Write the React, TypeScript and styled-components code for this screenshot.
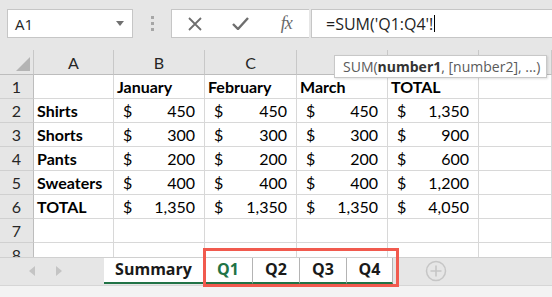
import React from "react";
import styled, { createGlobalStyle } from "styled-components";

const GlobalStyle = createGlobalStyle`
  html, body {
    margin: 0;
    padding: 0;
    overflow: hidden;
    background: #ffffff;
  }
  * {
    box-sizing: border-box;
  }
`;

const Window = styled.div`
  position: relative;
  width: 552px;
  height: 297px;
  display: flex;
  flex-direction: column;
  overflow: hidden;
  font-family: Lato, "Liberation Sans", sans-serif;
`;

// Строка формул
const Toolbar = styled.div`
  height: 50px;
  flex: none;
  display: flex;
  align-items: flex-start;
  padding: 9px 0 0 7px;
  background: #e6e6e6;
`;

const NameBox = styled.div`
  width: 126px;
  height: 29px;
  display: flex;
  align-items: center;
  justify-content: space-between;
  padding: 0 8px 0 7px;
  background: #ffffff;
  border: 1px solid #c6c6c6;
  font-family: "Open Sans", "Noto Sans", sans-serif;
  font-size: 15px;
  color: #262626;
`;

const Grip = styled.div`
  width: 38px;
  height: 29px;
  display: flex;
  flex-direction: column;
  align-items: center;
  justify-content: center;
  gap: 3px;
`;

const GripDot = styled.span`
  width: 3px;
  height: 3px;
  background: #a6a6a6;
`;

const ButtonBox = styled.div`
  width: 138px;
  height: 29px;
  display: flex;
  align-items: center;
  background: #ffffff;
  border: 1px solid #c6c6c6;
  border-right: none;
`;

const BarButton = styled.div`
  width: 46px;
  height: 100%;
  display: flex;
  align-items: center;
  justify-content: center;
`;

const Fx = styled.span`
  font-family: "Liberation Serif", serif;
  font-style: italic;
  font-size: 18px;
  color: #6a6a6a;
  letter-spacing: -1px;
`;

const FormulaInput = styled.div`
  flex: 1;
  height: 29px;
  margin-left: 2px;
  margin-right: -2px;
  display: flex;
  align-items: center;
  padding-left: 14px;
  background: #ffffff;
  border: 1px solid #c6c6c6;
  font-family: "Open Sans", "Noto Sans", sans-serif;
  font-size: 16px;
  color: #1f1f1f;
`;

const Caret = styled.span`
  display: inline-block;
  width: 1px;
  height: 17px;
  margin-left: 1px;
  background: #000000;
`;

// Сетка листа
const Sheet = styled.div`
  position: relative;
  flex: 1;
  overflow: hidden;
  display: grid;
  grid-template-columns: 34px 80px 91px 92px 91px 91px 1fr;
  grid-template-rows: 25px;
  grid-auto-rows: 24px;
  align-content: start;
`;

const HeadCell = styled.div`
  display: flex;
  align-items: center;
  justify-content: center;
  position: relative;
  background: #e6e6e6;
  border-right: 1px solid #c8c8c8;
  border-bottom: 1px solid #bdbdbd;
  font-size: 16px;
  color: #262626;
`;

const RowHead = styled.div`
  display: flex;
  align-items: center;
  justify-content: center;
  background: #e6e6e6;
  border-right: 1px solid #bdbdbd;
  border-bottom: 1px solid #d0d0d0;
  font-size: 16px;
  color: #262626;
`;

const Cell = styled.div<{ $bold?: boolean }>`
  display: flex;
  align-items: center;
  padding: 0 3px;
  border-right: 1px solid #d8d8d8;
  border-bottom: 1px solid #d8d8d8;
  font-size: 16px;
  font-weight: ${(p) => (p.$bold ? 700 : 400)};
  color: #000000;
  white-space: nowrap;
  overflow: hidden;
`;

const MoneyCell = styled(Cell)`
  justify-content: space-between;
  padding: 0 9px 0 9px;
`;

const Tooltip = styled.div`
  position: absolute;
  left: 334px;
  top: 5px;
  width: 213px;
  height: 23px;
  display: flex;
  align-items: center;
  padding-left: 8px;
  background: #ffffff;
  border: 1px solid #c8c8c8;
  box-shadow: 1px 1px 2px rgba(0, 0, 0, 0.12);
  font-family: "Open Sans", "Noto Sans", sans-serif;
  font-size: 14px;
  color: #5a5a5a;
  white-space: nowrap;
`;

const Arg = styled.b`
  color: #333333;
  font-weight: 700;
`;

// Ярлыки листов
const TabBar = styled.div`
  height: 28px;
  flex: none;
  display: flex;
  align-items: flex-start;
  background: #e6e6e6;
  border-top: 1px solid #d0d0d0;
`;

const Nav = styled.div`
  width: 104px;
  height: 26px;
  display: flex;
  align-items: center;
  padding-left: 29px;
  gap: 21px;
`;

const Tab = styled.div<{ $width: number; $active?: boolean }>`
  width: ${(p) => p.$width}px;
  height: 26px;
  display: flex;
  align-items: center;
  justify-content: center;
  padding-bottom: 2px;
  background: #ffffff;
  border-right: 1px solid #b4b4b4;
  border-bottom: 2px solid #217346;
  font-family: "Open Sans", "Noto Sans", sans-serif;
  font-size: 16px;
  font-weight: 700;
  color: ${(p) => (p.$active ? "#217346" : "#1a1a1a")};
`;

const AddSheet = styled.div`
  margin-left: 32px;
  height: 26px;
  display: flex;
  align-items: center;
`;

const ScrollStrip = styled.div`
  height: 12px;
  flex: none;
  background: #f3f3f3;
  border-top: 1px solid #d6d6d6;
`;

const Highlight = styled.div`
  position: absolute;
  left: 203px;
  top: 248px;
  width: 196px;
  height: 39px;
  border: 3px solid #f15a4e;
  pointer-events: none;
`;

type Row = {
  label: string;
  values: string[] | null;
  header?: boolean;
};

const rows: Row[] = [
  { label: "", values: ["January", "February", "March", "TOTAL"], header: true },
  { label: "Shirts", values: ["450", "450", "450", "1,350"] },
  { label: "Shorts", values: ["300", "300", "300", "900"] },
  { label: "Pants", values: ["200", "200", "200", "600"] },
  { label: "Sweaters", values: ["400", "400", "400", "1,200"] },
  { label: "TOTAL", values: ["1,350", "1,350", "1,350", "4,050"] },
  { label: "", values: null },
  { label: "", values: null },
];

const columns = ["A", "B", "C", "D", "E", "F"];

const tabs = [
  { name: "Summary", width: 100 },
  { name: "Q1", width: 49, active: true },
  { name: "Q2", width: 47 },
  { name: "Q3", width: 47 },
  { name: "Q4", width: 46 },
];

export default function App() {
  return (
    <Window>
      <GlobalStyle />
      <Toolbar>
        <NameBox>
          <span>A1</span>
          <svg width="8" height="5" viewBox="0 0 8 5">
            <path d="M0 0h8L4 5z" fill="#707070" />
          </svg>
        </NameBox>
        <Grip>
          <GripDot />
          <GripDot />
          <GripDot />
        </Grip>
        <ButtonBox>
          <BarButton>
            <svg width="14" height="14" viewBox="0 0 14 14">
              <path d="M1 1l12 12M13 1L1 13" stroke="#6e6e6e" strokeWidth="1.8" fill="none" />
            </svg>
          </BarButton>
          <BarButton>
            <svg width="17" height="13" viewBox="0 0 17 13">
              <path d="M1 7l5 5L16 1" stroke="#6e6e6e" strokeWidth="2.4" fill="none" />
            </svg>
          </BarButton>
          <BarButton>
            <Fx>fx</Fx>
          </BarButton>
        </ButtonBox>
        <FormulaInput>
          =SUM('Q1:Q4'!
          <Caret />
        </FormulaInput>
      </Toolbar>

      <Sheet>
        <HeadCell>
          <svg
            width="14"
            height="14"
            viewBox="0 0 14 14"
            style={{ position: "absolute", right: 3, bottom: 3 }}
          >
            <path d="M14 0V14H0z" fill="#b4b4b4" />
          </svg>
        </HeadCell>
        {columns.map((c) => (
          <HeadCell key={c}>{c}</HeadCell>
        ))}
        {rows.map((row, i) => (
          <React.Fragment key={i}>
            <RowHead>{i + 1}</RowHead>
            <Cell $bold>{row.label}</Cell>
            {row.values
              ? row.values.map((v, j) =>
                  row.header ? (
                    <Cell key={j} $bold>
                      {v}
                    </Cell>
                  ) : (
                    <MoneyCell key={j}>
                      <span>$</span>
                      <span>{v}</span>
                    </MoneyCell>
                  )
                )
              : [0, 1, 2, 3].map((j) => <Cell key={j} />)}
            <Cell />
          </React.Fragment>
        ))}
        <Tooltip>
          SUM(<Arg>number1</Arg>, [number2], ...)
        </Tooltip>
      </Sheet>

      <TabBar>
        <Nav>
          <svg width="6" height="10" viewBox="0 0 6 10">
            <path d="M6 0v10L0 5z" fill="#c4c4c4" />
          </svg>
          <svg width="6" height="10" viewBox="0 0 6 10">
            <path d="M0 0v10l6-5z" fill="#c4c4c4" />
          </svg>
        </Nav>
        {tabs.map((t) => (
          <Tab key={t.name} $width={t.width} $active={t.active}>
            {t.name}
          </Tab>
        ))}
        <AddSheet>
          <svg width="22" height="22" viewBox="0 0 22 22">
            <circle cx="11" cy="11" r="9.5" stroke="#c6c6c6" strokeWidth="1.5" fill="none" />
            <path d="M11 5.5v11M5.5 11h11" stroke="#c6c6c6" strokeWidth="1.6" />
          </svg>
        </AddSheet>
      </TabBar>
      <ScrollStrip />
      <Highlight />
    </Window>
  );
}
